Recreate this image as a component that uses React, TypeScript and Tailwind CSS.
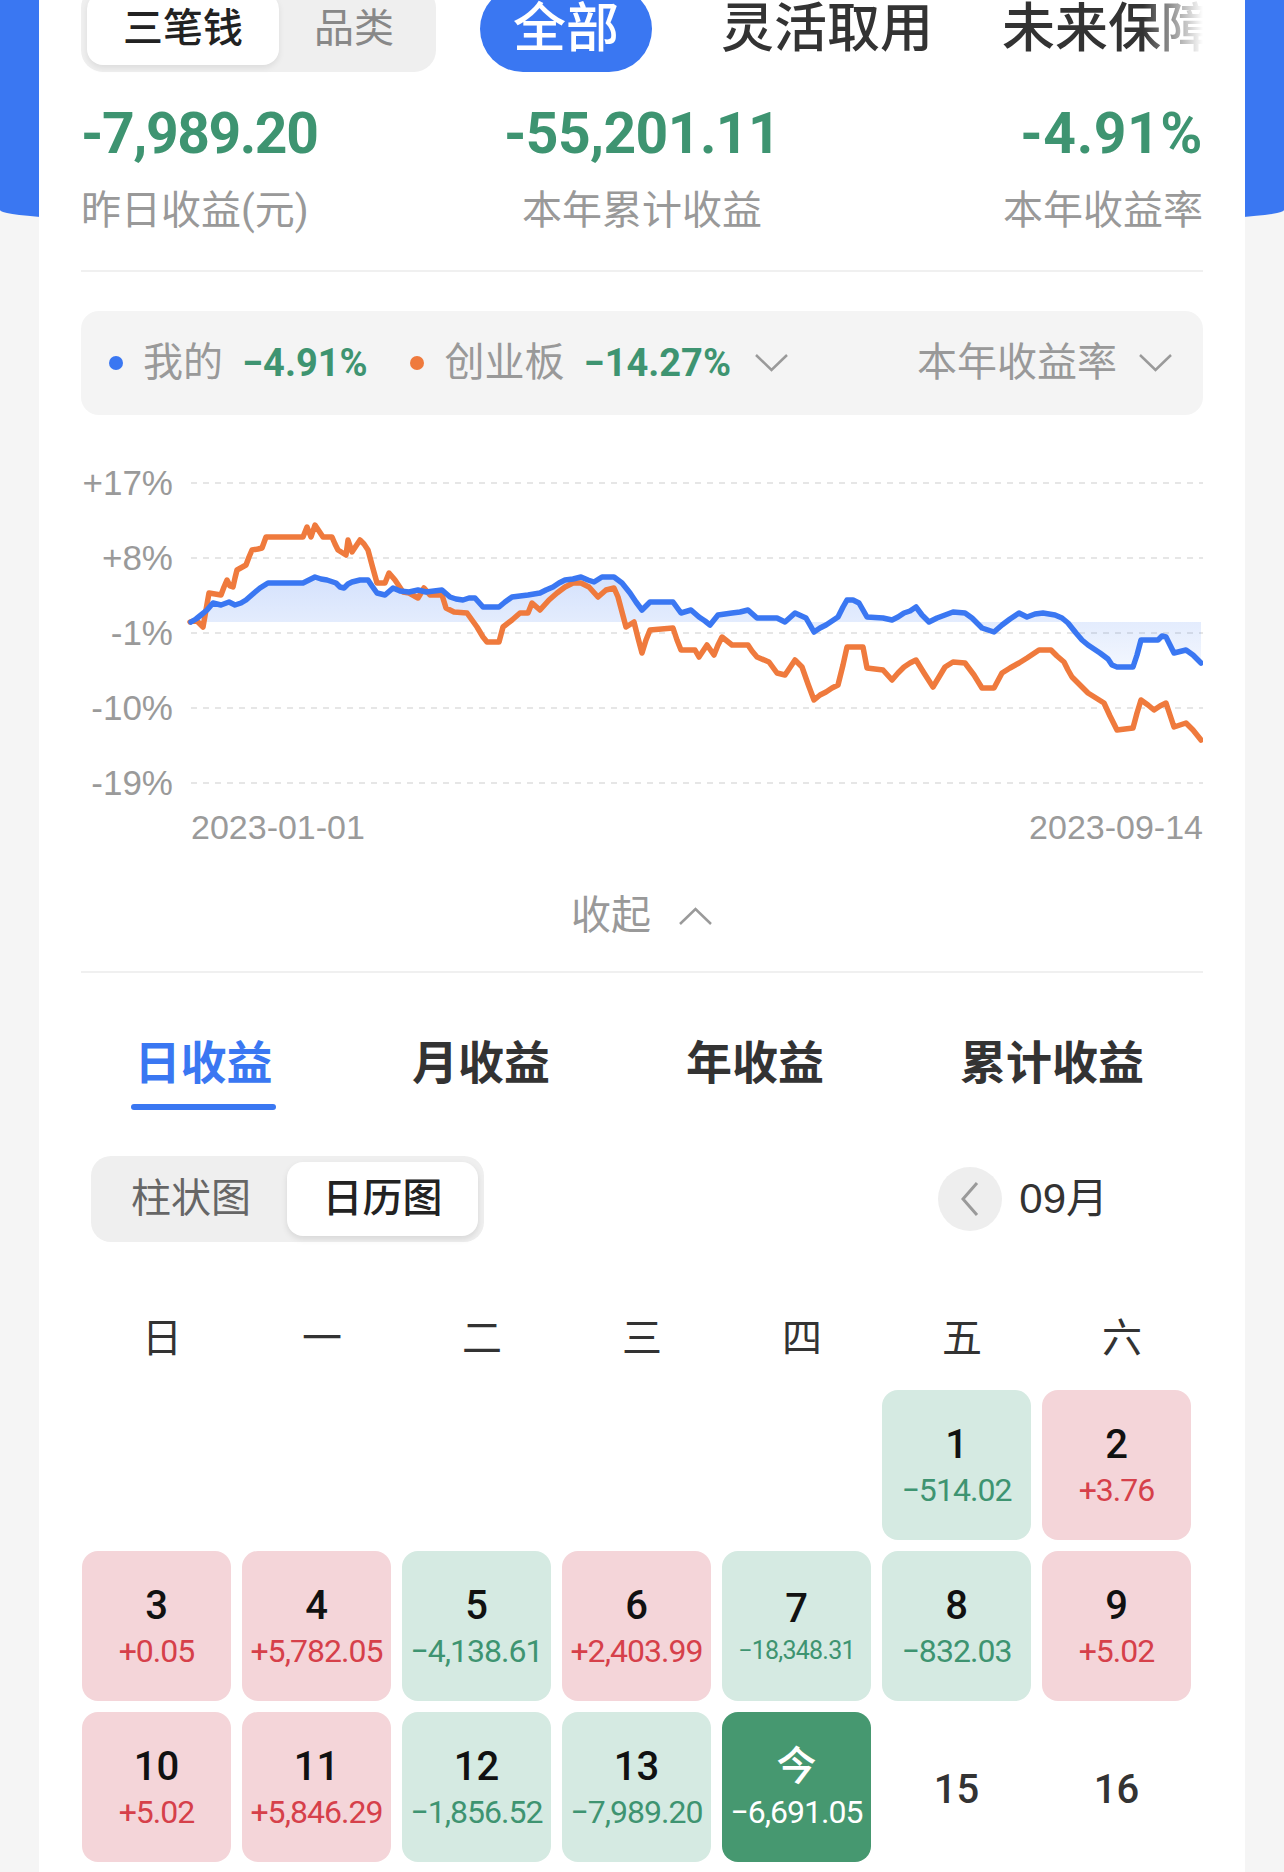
import React from 'react';

type Pt = [number, number];

// 我的收益曲线（坐标按画布像素）
const mine: Pt[] = [
  [191, 622], [196, 619], [201, 615], [207, 610], [213, 603], [221, 605], [229, 602], [235, 605], [241, 603], [246, 600],
  [254, 593], [260, 588], [268, 583], [303, 583], [309, 580], [315, 577], [321, 579], [327, 580], [336, 583], [340, 587],
  [344, 588], [348, 584], [352, 582], [360, 580], [368, 580], [372, 586], [377, 593], [385, 595], [393, 588], [400, 591],
  [409, 592], [418, 590], [426, 592], [434, 591], [442, 590], [450, 597], [456, 599], [463, 600], [469, 598], [475, 598],
  [483, 607], [499, 607], [505, 602], [512, 597], [520, 596], [528, 595], [534, 594], [540, 593], [546, 590], [553, 587],
  [559, 583], [565, 580], [573, 579], [581, 577], [588, 580], [594, 582], [602, 577], [614, 577], [622, 583], [626, 588],
  [630, 593], [636, 602], [642, 610], [650, 602], [673, 602], [681, 613], [691, 610], [699, 617], [705, 621], [710, 625],
  [718, 615], [732, 613], [740, 612], [748, 610], [757, 618], [777, 618], [785, 622], [795, 613], [806, 618], [814, 632],
  [820, 628], [826, 625], [838, 617], [843, 607], [847, 600], [853, 600], [859, 603], [867, 617], [883, 618], [892, 620],
  [898, 617], [904, 613], [910, 611], [916, 607], [922, 615], [929, 622], [937, 618], [945, 615], [953, 612], [965, 613],
  [972, 618], [982, 628], [994, 632], [1002, 625], [1010, 619], [1019, 613], [1027, 617], [1035, 614], [1043, 613], [1055, 615],
  [1062, 618], [1068, 623], [1076, 633], [1082, 640], [1088, 645], [1094, 649], [1100, 653], [1108, 659], [1112, 665], [1117, 667],
  [1133, 667], [1137, 655], [1141, 640], [1150, 640], [1158, 640], [1162, 636], [1166, 637], [1170, 645], [1174, 653], [1186, 650],
  [1193, 655], [1201, 663],
];

// 创业板
const gem: Pt[] = [
  [190, 622], [196, 620], [200, 624], [203, 627], [206, 610], [209, 593], [215, 594], [221, 595], [224, 587], [227, 580],
  [230, 586], [233, 587], [235, 578], [237, 570], [246, 565], [249, 557], [252, 550], [258, 549], [262, 548], [266, 537],
  [303, 537], [307, 527], [311, 537], [315, 525], [319, 531], [323, 537], [332, 537], [335, 544], [338, 550], [346, 555],
  [348, 540], [352, 552], [356, 546], [360, 540], [364, 544], [368, 550], [372, 565], [377, 583], [385, 583], [389, 573],
  [395, 580], [403, 592], [409, 593], [418, 598], [424, 588], [430, 595], [442, 595], [446, 608], [454, 612], [467, 613],
  [472, 620], [477, 627], [483, 637], [487, 642], [499, 642], [503, 627], [512, 620], [520, 613], [528, 613], [532, 603],
  [540, 610], [549, 600], [557, 593], [565, 587], [573, 583], [581, 583], [589, 587], [598, 597], [606, 590], [614, 588],
  [618, 597], [622, 612], [626, 627], [634, 622], [638, 638], [642, 653], [646, 640], [650, 630], [673, 628], [677, 640],
  [681, 650], [695, 650], [699, 657], [707, 645], [714, 655], [718, 645], [722, 637], [732, 645], [748, 645], [752, 651],
  [757, 657], [769, 662], [777, 673], [785, 675], [795, 660], [802, 667], [808, 684], [814, 700], [820, 695], [826, 692],
  [832, 688], [838, 685], [843, 665], [847, 647], [863, 647], [867, 668], [883, 670], [892, 680], [898, 673], [904, 667],
  [910, 663], [916, 660], [924, 673], [933, 687], [939, 677], [945, 667], [953, 662], [965, 663], [974, 675], [982, 688],
  [994, 688], [1002, 673], [1010, 668], [1019, 663], [1027, 658], [1033, 654], [1039, 650], [1051, 650], [1057, 656], [1064, 662],
  [1068, 670], [1072, 677], [1080, 685], [1088, 693], [1096, 698], [1104, 703], [1110, 716], [1117, 730], [1125, 729], [1133, 728],
  [1137, 713], [1141, 700], [1148, 705], [1154, 710], [1160, 706], [1166, 703], [1170, 715], [1174, 727], [1186, 723], [1193, 730],
  [1201, 740],
];

const pts = (a: Pt[]) => a.map(([x, y]) => `${x},${y}`).join(' ');

const grid = [
  { y: 483, label: '+17%' },
  { y: 558, label: '+8%' },
  { y: 633, label: '-1%' },
  { y: 708, label: '-10%' },
  { y: 783, label: '-19%' },
];

type Day = { d: string; v?: string; t?: 'g' | 'r' | 'today'; small?: boolean };

const days: (Day | null)[] = [
  null, null, null, null, null,
  { d: '1', v: '−514.02', t: 'g' },
  { d: '2', v: '+3.76', t: 'r' },
  { d: '3', v: '+0.05', t: 'r' },
  { d: '4', v: '+5,782.05', t: 'r' },
  { d: '5', v: '−4,138.61', t: 'g' },
  { d: '6', v: '+2,403.99', t: 'r' },
  { d: '7', v: '−18,348.31', t: 'g', small: true },
  { d: '8', v: '−832.03', t: 'g' },
  { d: '9', v: '+5.02', t: 'r' },
  { d: '10', v: '+5.02', t: 'r' },
  { d: '11', v: '+5,846.29', t: 'r' },
  { d: '12', v: '−1,856.52', t: 'g' },
  { d: '13', v: '−7,989.20', t: 'g' },
  { d: '今', v: '−6,691.05', t: 'today' },
  { d: '15' },
  { d: '16' },
];

function ChevronDown({ className = '' }: { className?: string }) {
  return (
    <svg className={className} width="35" height="20" viewBox="0 0 35 20">
      <polyline points="2,2 17.5,17 33,2" fill="none" stroke="#9a9a9a" strokeWidth="2.5" />
    </svg>
  );
}

function DayCell({ day }: { day: Day | null }) {
  if (!day) return <div className="h-[150px] w-[149px]" />;
  if (!day.t) {
    return (
      <div className="flex h-[150px] w-[149px] items-center justify-center pt-[6px] text-[40px] font-medium leading-none text-[#333]">
        {day.d}
      </div>
    );
  }
  const bg = day.t === 'g' ? 'bg-[#d5eae2]' : day.t === 'r' ? 'bg-[#f4d5d9]' : 'bg-[#469870]';
  const numColor = day.t === 'today' ? 'text-white' : 'text-[#111]';
  const valColor = day.t === 'g' ? 'text-[#3e9471]' : day.t === 'r' ? 'text-[#d6404a]' : 'text-white';
  return (
    <div className={`flex h-[150px] w-[149px] flex-col items-center justify-center gap-[9px] rounded-[16px] ${bg}`}>
      <span className={`text-[40px] font-medium leading-none ${numColor}`}>{day.d}</span>
      <span className={`${day.small ? 'text-[25px]' : 'text-[32px]'} leading-none tracking-[-0.03em] ${valColor}`}>{day.v}</span>
    </div>
  );
}

export default function App() {
  return (
    <div className="min-h-[1872px] overflow-hidden bg-[#f5f5f5] font-['Roboto','Noto_Sans_CJK_SC',sans-serif]">
      <div className="h-[230px] rounded-bl-[50%_20px] rounded-br-[50%_20px] bg-[#3a77f2]" />

      <div className="mx-[39px] -mt-[244px] bg-white px-[42px] pb-[60px]">
        {/* 顶部切换 */}
        <div className="flex h-[86px] items-center">
          <div className="flex h-full shrink-0 items-center rounded-[22px] bg-[#efefef] pl-[6px] pr-[42px]">
            <div className="flex h-[72px] items-center rounded-[16px] bg-white px-[36px] text-[40px] font-medium leading-none text-[#222] shadow-[0_3px_6px_rgba(0,0,0,0.08)]">
              三笔钱
            </div>
            <span className="ml-[35px] text-[40px] leading-none text-[#888]">品类</span>
          </div>
          <div className="relative ml-[44px] flex h-full flex-1 items-center gap-[69px] overflow-hidden">
            <div className="flex h-full shrink-0 items-center rounded-full bg-[#3a77f2] px-[33px] text-[53px] font-medium leading-none text-white">
              全部
            </div>
            <span className="shrink-0 text-[53px] font-medium leading-none text-[#333]">灵活取用</span>
            <span className="shrink-0 text-[53px] font-medium leading-none text-[#333]">未来保障</span>
            <div className="pointer-events-none absolute inset-y-0 right-0 w-[60px] bg-linear-to-l from-white to-white/0" />
          </div>
        </div>

        {/* 收益概览 */}
        <div className="mt-[33px] grid grid-cols-3">
          <div className="text-left">
            <div className="text-[57px] font-bold leading-none tracking-[-0.025em] text-[#3e9471]">-7,989.20</div>
            <div className="mt-[25px] text-[40px] leading-[48px] text-[#999]">昨日收益(元)</div>
          </div>
          <div className="text-center">
            <div className="text-[57px] font-bold leading-none tracking-[-0.01em] text-[#3e9471]">-55,201.11</div>
            <div className="mt-[25px] text-[40px] leading-[48px] text-[#999]">本年累计收益</div>
          </div>
          <div className="text-right">
            <div className="text-[57px] font-bold leading-none tracking-[0.01em] text-[#3e9471]">-4.91%</div>
            <div className="mt-[25px] text-[40px] leading-[48px] text-[#999]">本年收益率</div>
          </div>
        </div>

        <div className="mt-[35px] h-[2px] bg-[#f0f0f0]" />

        {/* 图例 */}
        <div className="mt-[39px] flex h-[104px] items-center justify-between rounded-[18px] bg-[#f4f4f4] pl-[28px] pr-[30px]">
          <div className="flex items-center leading-none">
            <span className="h-[14px] w-[14px] rounded-full bg-[#3a77f2]" />
            <span className="ml-[20px] text-[40px] text-[#999]">我的</span>
            <span className="ml-[19px] text-[38px] font-bold text-[#3e9471]">−4.91%</span>
            <span className="ml-[42px] h-[14px] w-[14px] rounded-full bg-[#ef7a3d]" />
            <span className="ml-[21px] text-[40px] text-[#999]">创业板</span>
            <span className="ml-[19px] text-[38px] font-bold text-[#3e9471]">−14.27%</span>
            <ChevronDown className="ml-[23px]" />
          </div>
          <div className="flex items-center leading-none">
            <span className="text-[40px] text-[#999]">本年收益率</span>
            <ChevronDown className="ml-[21px]" />
          </div>
        </div>

        {/* 收益率走势 */}
        <svg className="mt-[15px] block" width="1122" height="420" viewBox="81 430 1122 420">
          <defs>
            <linearGradient id="mineFill" gradientUnits="userSpaceOnUse" x1="0" y1="575" x2="0" y2="680">
              <stop offset="0" stopColor="#3a77f2" stopOpacity="0.22" />
              <stop offset="1" stopColor="#3a77f2" stopOpacity="0.04" />
            </linearGradient>
          </defs>
          {grid.map((g) => (
            <g key={g.label}>
              <line x1="191" x2="1203" y1={g.y} y2={g.y} stroke="#dedede" strokeWidth="1.5" strokeDasharray="6 6" />
              <text x="173" y={g.y + 12} textAnchor="end" fontSize="35" fill="#9a9a9a" fontFamily="'Liberation Sans', Arial, sans-serif">
                {g.label}
              </text>
            </g>
          ))}
          <path d={`M191,622 L${pts(mine)} L1201,622 Z`} fill="url(#mineFill)" />
          <polyline points={pts(gem)} fill="none" stroke="#ef7a3d" strokeWidth="5.5" strokeLinejoin="round" strokeLinecap="round" />
          <polyline points={pts(mine)} fill="none" stroke="#3a77f2" strokeWidth="5.5" strokeLinejoin="round" strokeLinecap="round" />
          <text x="191" y="839" fontSize="34" fill="#9a9a9a" fontFamily="'Liberation Sans', Arial, sans-serif">2023-01-01</text>
          <text x="1203" y="839" textAnchor="end" fontSize="34" fill="#9a9a9a" fontFamily="'Liberation Sans', Arial, sans-serif">
            2023-09-14
          </text>
        </svg>

        <div className="mt-[42px] flex h-[48px] items-center justify-center leading-none">
          <span className="text-[40px] text-[#999]">收起</span>
          <svg className="ml-[27px]" width="35" height="20" viewBox="0 0 35 20">
            <polyline points="2,18 17.5,3 33,18" fill="none" stroke="#9a9a9a" strokeWidth="2.5" />
          </svg>
        </div>

        <div className="mt-[31px] h-[2px] bg-[#f0f0f0]" />

        {/* 收益类型 */}
        <div className="mt-[67px] flex items-start gap-[136px] pl-[50px] text-[46px] font-bold leading-none">
          <div className="flex w-[145px] flex-col items-center">
            <span className="text-[#3a77f2]">日收益</span>
            <span className="mt-[18px] h-[6px] w-[145px] rounded-full bg-[#3a77f2]" />
          </div>
          <span className="text-[#333]">月收益</span>
          <span className="text-[#333]">年收益</span>
          <span className="text-[#333]">累计收益</span>
        </div>

        <div className="mt-[46px] flex items-center justify-between pl-[10px] pr-[95px]">
          <div className="flex h-[86px] items-center rounded-[20px] bg-[#efefef] pl-[40px] pr-[6px] leading-none">
            <span className="text-[40px] text-[#666]">柱状图</span>
            <div className="ml-[36px] flex h-[74px] w-[191px] items-center justify-center rounded-[16px] bg-white text-[40px] font-medium text-[#222] shadow-[0_3px_6px_rgba(0,0,0,0.1)]">
              日历图
            </div>
          </div>
          <div className="flex items-center">
            <div className="flex h-[64px] w-[64px] items-center justify-center rounded-full bg-[#eeeeee]">
              <svg width="20" height="36" viewBox="0 0 20 36">
                <polyline points="17,2 3,18 17,34" fill="none" stroke="#9a9a9a" strokeWidth="3" />
              </svg>
            </div>
            <span className="ml-[17px] font-['Liberation_Sans','Noto_Sans_CJK_SC',sans-serif] text-[42px] leading-none text-[#333]">
              09月
            </span>
          </div>
        </div>

        {/* 日历 */}
        <div className="ml-[1px] mt-[73px] grid w-[1120px] grid-cols-7">
          {['日', '一', '二', '三', '四', '五', '六'].map((w) => (
            <div key={w} className="flex h-[48px] items-center justify-center text-[40px] leading-none text-[#333]">
              {w}
            </div>
          ))}
        </div>
        <div className="ml-[1px] mt-[27px] grid w-[1120px] grid-cols-7 gap-y-[11px]">
          {days.map((day, i) => (
            <DayCell key={i} day={day} />
          ))}
        </div>
      </div>
    </div>
  );
}
